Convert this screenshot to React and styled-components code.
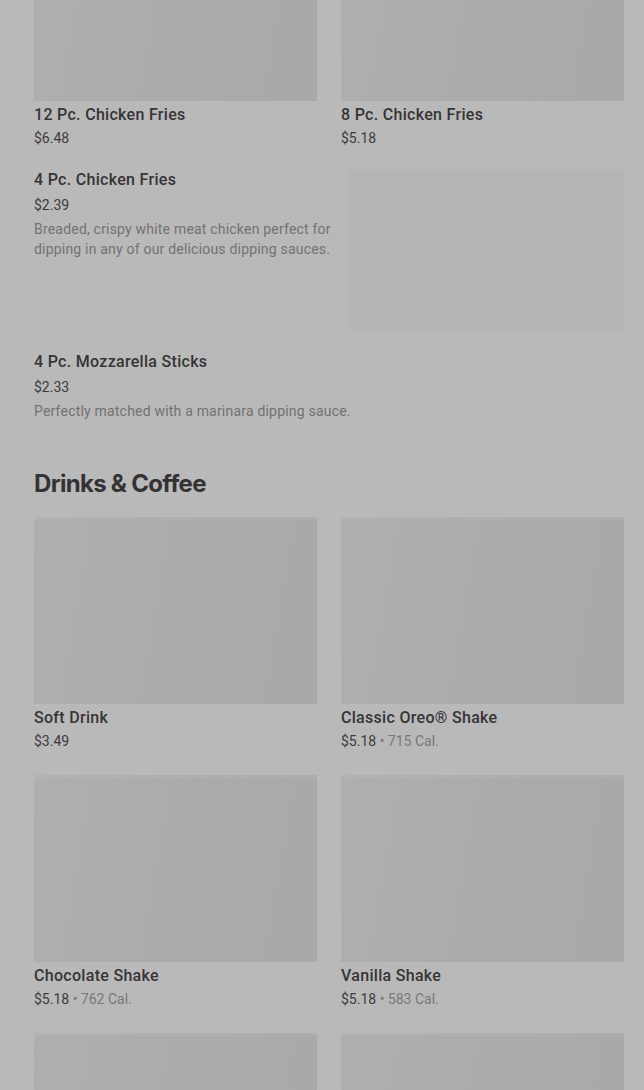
import React from 'react';
import styled, { createGlobalStyle } from 'styled-components';

const GlobalStyle = createGlobalStyle`
  html, body {
    margin: 0;
    padding: 0;
    background: #b9b9b9;
    overflow: hidden;
  }
  body {
    font-family: Roboto, "Liberation Sans", sans-serif;
  }
`;

const Page = styled.div`
  width: 644px;
  height: 1090px;
  overflow: hidden;
  background: #b9b9b9;
  box-sizing: border-box;
  padding: 0 20px 0 34px;
`;

const Scroller = styled.div`
  margin-top: -86px;
`;

const Grid = styled.div`
  display: grid;
  grid-template-columns: 283px 283px;
  column-gap: 24px;
  row-gap: 24px;
`;

const Card = styled.div`
  display: flex;
  flex-direction: column;
`;

const Photo = styled.div`
  height: 187px;
  background:
    linear-gradient(180deg, rgba(255, 255, 255, 0.05) 0 3px, transparent 3px),
    linear-gradient(100deg, #afafaf 0%, #ababab 45%, #a9a9a9 100%);
`;

const Title = styled.div`
  margin-top: ${p => p.$gap ?? 4}px;
  font-size: 16px;
  line-height: 20px;
  font-weight: 500;
  letter-spacing: 0.3px;
  color: #353535;
`;

const Meta = styled.div`
  margin-top: ${p => p.$gap ?? 3}px;
  font-size: 14px;
  line-height: 20px;
  color: #3c3c3c;
`;

const Cal = styled.span`
  color: #787878;
`;

const Description = styled.p`
  margin: 4px 0 0;
  font-size: 14px;
  line-height: 20px;
  letter-spacing: 0.2px;
  color: #727272;
`;

const ListItem = styled.div`
  display: flex;
  gap: 14px;
  margin-top: ${p => p.$top}px;
`;

const ListText = styled.div`
  flex: 1;
  padding-top: 3px;
`;

const ListPhoto = styled.div`
  width: 275px;
  height: 163px;
  flex-shrink: 0;
  background:
    linear-gradient(180deg, rgba(255, 255, 255, 0.04) 0 3px, transparent 3px),
    #b5b5b5;
`;

const SectionTitle = styled.h2`
  margin: 47px 0 17px;
  font-family: Inter, "Noto Sans", sans-serif;
  font-size: 24px;
  line-height: 32px;
  font-weight: 700;
  letter-spacing: -0.7px;
  color: #333333;
`;

const topTiles = [
  { name: '12 Pc. Chicken Fries', price: '$6.48' },
  { name: '8 Pc. Chicken Fries', price: '$5.18' },
];

const drinks = [
  { name: 'Soft Drink', price: '$3.49' },
  { name: 'Classic Oreo® Shake', price: '$5.18', cal: '715 Cal.' },
  { name: 'Chocolate Shake', price: '$5.18', cal: '762 Cal.' },
  { name: 'Vanilla Shake', price: '$5.18', cal: '583 Cal.' },
  { name: '', price: '' },
  { name: '', price: '' },
];

const Tile = ({ name, price, cal }) => (
  <Card>
    <Photo />
    {name && <Title>{name}</Title>}
    {price && (
      <Meta>
        {price}
        {cal && <Cal> • {cal}</Cal>}
      </Meta>
    )}
  </Card>
);

export default function App() {
  return (
    <>
      <GlobalStyle />
      <Page>
        <Scroller>
          <Grid>
            {topTiles.map(t => <Tile key={t.name} {...t} />)}
          </Grid>

          <ListItem $top={19}>
            <ListText>
              <Title $gap={0}>4 Pc. Chicken Fries</Title>
              <Meta $gap={5}>$2.39</Meta>
              <Description>
                Breaded, crispy white meat chicken perfect for dipping in any of our delicious dipping sauces.
              </Description>
            </ListText>
            <ListPhoto />
          </ListItem>

          <ListItem $top={19}>
            <ListText>
              <Title $gap={0}>4 Pc. Mozzarella Sticks</Title>
              <Meta $gap={5}>$2.33</Meta>
              <Description>Perfectly matched with a marinara dipping sauce.</Description>
            </ListText>
          </ListItem>

          <SectionTitle>Drinks &amp; Coffee</SectionTitle>
          <Grid>
            {drinks.map((d, i) => <Tile key={i} {...d} />)}
          </Grid>
        </Scroller>
      </Page>
    </>
  );
}
